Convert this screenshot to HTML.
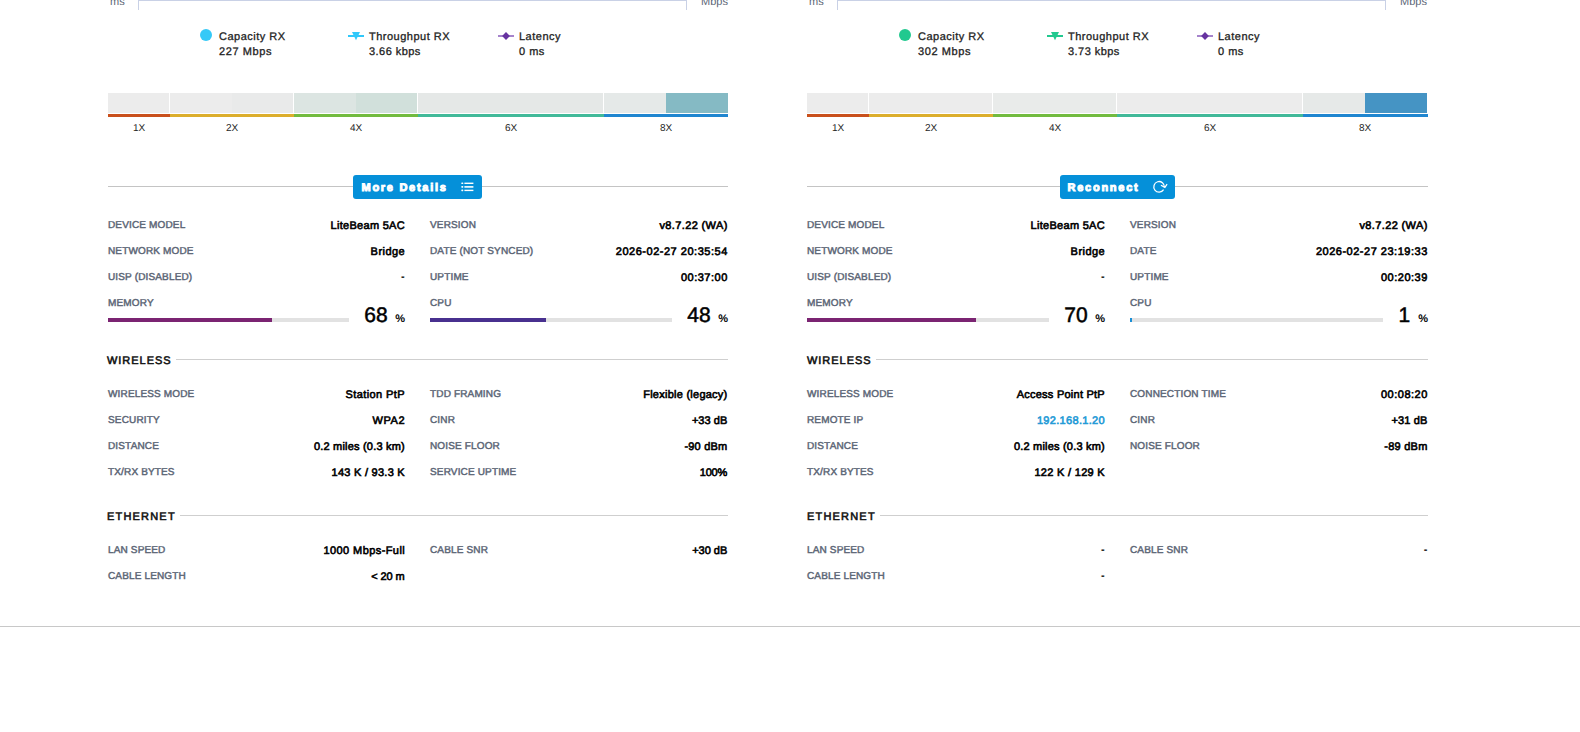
<!DOCTYPE html>
<html><head><meta charset="utf-8"><style>
html,body{margin:0;padding:0;background:#fff;width:1580px;height:732px;overflow:hidden;position:relative}
body{font-family:"Liberation Sans",sans-serif;text-rendering:geometricPrecision}
.t{position:absolute;white-space:nowrap}
.r{position:absolute}
</style></head><body>
<div class="t" style="left:110px;top:-3.31px;font-size:11px;line-height:11px;font-weight:400;color:#5c6676;">ms</div>
<div class="r" style="left:138px;top:0px;width:549px;height:1px;background:#c9d1e6;"></div>
<div class="r" style="left:138px;top:0px;width:1px;height:10px;background:#c9d1e6;"></div>
<div class="r" style="left:686px;top:0px;width:1px;height:10px;background:#c9d1e6;"></div>
<div class="t" style="left:328.00px;width:400px;text-align:right;top:-3.31px;font-size:11px;line-height:11px;font-weight:400;color:#5c6676;">Mbps</div>
<div class="r" style="left:200px;top:29px;width:12px;height:12px;border-radius:50%;background:#35c9f7"></div>
<div class="t" style="left:219px;top:32.09px;font-size:11px;line-height:11px;font-weight:400;color:#222;letter-spacing:0.5px;-webkit-text-stroke:0.3px #222;">Capacity RX</div>
<div class="t" style="left:219px;top:47.09px;font-size:11px;line-height:11px;font-weight:400;color:#222;letter-spacing:0.6px;-webkit-text-stroke:0.3px #222;">227 Mbps</div>
<svg class="r" style="left:346px;top:30px" width="20" height="12" viewBox="0 0 20 12"><rect x="2" y="5" width="16" height="2" fill="#30c8fa"/><path d="M6 2 L14 2 L10 10.2 Z" fill="#30c8fa"/></svg>
<div class="t" style="left:369px;top:32.09px;font-size:11px;line-height:11px;font-weight:400;color:#222;letter-spacing:0.5px;-webkit-text-stroke:0.3px #222;">Throughput RX</div>
<div class="t" style="left:369px;top:47.09px;font-size:11px;line-height:11px;font-weight:400;color:#222;letter-spacing:0.45px;-webkit-text-stroke:0.3px #222;">3.66 kbps</div>
<svg class="r" style="left:496px;top:30px" width="20" height="12" viewBox="0 0 20 12"><rect x="2" y="5" width="16" height="2" fill="#a684cc"/><path d="M10 2 L13.9 6 L10 10 L6.1 6 Z" fill="#6633a0"/></svg>
<div class="t" style="left:519px;top:32.09px;font-size:11px;line-height:11px;font-weight:400;color:#222;letter-spacing:0.5px;-webkit-text-stroke:0.3px #222;">Latency</div>
<div class="t" style="left:519px;top:47.09px;font-size:11px;line-height:11px;font-weight:400;color:#222;letter-spacing:0.5px;-webkit-text-stroke:0.3px #222;">0 ms</div>
<div class="r" style="left:108px;top:93px;width:62px;height:20px;background:#ececec;"></div>
<div class="r" style="left:170px;top:93px;width:62px;height:20px;background:#ececec;"></div>
<div class="r" style="left:232px;top:93px;width:62px;height:20px;background:#e9eaea;"></div>
<div class="r" style="left:294px;top:93px;width:62px;height:20px;background:#dce5e2;"></div>
<div class="r" style="left:356px;top:93px;width:62px;height:20px;background:#d1e0db;"></div>
<div class="r" style="left:418px;top:93px;width:62px;height:20px;background:#e5e8e7;"></div>
<div class="r" style="left:480px;top:93px;width:62px;height:20px;background:#e5e8e7;"></div>
<div class="r" style="left:542px;top:93px;width:62px;height:20px;background:#e5e8e7;"></div>
<div class="r" style="left:604px;top:93px;width:62px;height:20px;background:#e5e9e8;"></div>
<div class="r" style="left:666px;top:93px;width:62px;height:20px;background:#85bac4;"></div>
<div class="r" style="left:169px;top:93px;width:1px;height:21px;background:#fff;"></div>
<div class="r" style="left:293px;top:93px;width:1px;height:21px;background:#fff;"></div>
<div class="r" style="left:417px;top:93px;width:1px;height:21px;background:#fff;"></div>
<div class="r" style="left:603px;top:93px;width:1px;height:21px;background:#fff;"></div>
<div class="r" style="left:108px;top:114px;width:62px;height:3px;background:#c9501c;"></div>
<div class="r" style="left:170px;top:114px;width:124px;height:3px;background:#dcae2c;"></div>
<div class="r" style="left:294px;top:114px;width:124px;height:3px;background:#72bb3f;"></div>
<div class="r" style="left:418px;top:114px;width:186px;height:3px;background:#41b999;"></div>
<div class="r" style="left:604px;top:114px;width:124px;height:3px;background:#1f86d0;"></div>
<div class="t" style="left:109px;width:60px;text-align:center;top:123.53px;font-size:10px;line-height:10px;color:#1e1e1e">1X</div>
<div class="t" style="left:202px;width:60px;text-align:center;top:123.53px;font-size:10px;line-height:10px;color:#1e1e1e">2X</div>
<div class="t" style="left:326px;width:60px;text-align:center;top:123.53px;font-size:10px;line-height:10px;color:#1e1e1e">4X</div>
<div class="t" style="left:481px;width:60px;text-align:center;top:123.53px;font-size:10px;line-height:10px;color:#1e1e1e">6X</div>
<div class="t" style="left:636px;width:60px;text-align:center;top:123.53px;font-size:10px;line-height:10px;color:#1e1e1e">8X</div>
<div class="r" style="left:108px;top:186px;width:620px;height:1px;background:#c4c4c4;"></div>
<div class="r" style="left:353px;top:175px;width:129px;height:24px;background:#0590d9;border-radius:3px"></div>
<div class="t" style="left:361.5px;top:182.69px;font-size:11px;line-height:11px;font-weight:700;color:#fff;letter-spacing:1.72px;-webkit-text-stroke:0.95px #fff;">More Details</div>
<svg class="r" style="left:461px;top:181px" width="14" height="12" viewBox="0 0 14 12"><g fill="#fff"><rect x="0.3" y="1.5" width="2" height="1.6" rx="0.6"/><rect x="3.4" y="1.6" width="9" height="1.4"/><rect x="0.3" y="5.1" width="2" height="1.6" rx="0.6"/><rect x="3.4" y="5.1" width="9" height="1.6"/><rect x="0.3" y="8.6" width="2" height="1.6" rx="0.6"/><rect x="3.4" y="8.7" width="9" height="1.4"/></g></svg>
<div class="t" style="left:108px;top:220.53px;font-size:10px;line-height:10px;font-weight:400;color:#5c6676;letter-spacing:0.15px;-webkit-text-stroke:0.45px #5c6676;">DEVICE MODEL</div>
<div class="t" style="left:4.99px;width:400px;text-align:right;top:220.59px;font-size:11px;line-height:11px;font-weight:400;color:#000;letter-spacing:0.287px;-webkit-text-stroke:0.6px #000;">LiteBeam 5AC</div>
<div class="t" style="left:430px;top:220.53px;font-size:10px;line-height:10px;font-weight:400;color:#5c6676;letter-spacing:0.15px;-webkit-text-stroke:0.45px #5c6676;">VERSION</div>
<div class="t" style="left:327.66px;width:400px;text-align:right;top:220.59px;font-size:11px;line-height:11px;font-weight:400;color:#000;letter-spacing:0.365px;-webkit-text-stroke:0.6px #000;">v8.7.22 (WA)</div>
<div class="t" style="left:108px;top:246.53px;font-size:10px;line-height:10px;font-weight:400;color:#5c6676;letter-spacing:0.15px;-webkit-text-stroke:0.45px #5c6676;">NETWORK MODE</div>
<div class="t" style="left:5.16px;width:400px;text-align:right;top:246.59px;font-size:11px;line-height:11px;font-weight:400;color:#000;letter-spacing:0.461px;-webkit-text-stroke:0.6px #000;">Bridge</div>
<div class="t" style="left:430px;top:246.53px;font-size:10px;line-height:10px;font-weight:400;color:#5c6676;letter-spacing:0.15px;-webkit-text-stroke:0.45px #5c6676;">DATE (NOT SYNCED)</div>
<div class="t" style="left:327.82px;width:400px;text-align:right;top:246.59px;font-size:11px;line-height:11px;font-weight:400;color:#000;letter-spacing:0.519px;-webkit-text-stroke:0.6px #000;">2026-02-27 20:35:54</div>
<div class="t" style="left:108px;top:272.54px;font-size:10px;line-height:10px;font-weight:400;color:#5c6676;letter-spacing:0.15px;-webkit-text-stroke:0.45px #5c6676;">UISP (DISABLED)</div>
<div class="t" style="left:4.70px;width:400px;text-align:right;top:271.59px;font-size:11px;line-height:11px;font-weight:700;color:#000;">-</div>
<div class="t" style="left:430px;top:272.54px;font-size:10px;line-height:10px;font-weight:400;color:#5c6676;letter-spacing:0.15px;-webkit-text-stroke:0.45px #5c6676;">UPTIME</div>
<div class="t" style="left:327.81px;width:400px;text-align:right;top:272.59px;font-size:11px;line-height:11px;font-weight:400;color:#000;letter-spacing:0.51px;-webkit-text-stroke:0.6px #000;">00:37:00</div>
<div class="t" style="left:108px;top:298.54px;font-size:10px;line-height:10px;font-weight:400;color:#5c6676;letter-spacing:0.15px;-webkit-text-stroke:0.45px #5c6676;">MEMORY</div>
<div class="t" style="left:430px;top:298.54px;font-size:10px;line-height:10px;font-weight:400;color:#5c6676;letter-spacing:0.15px;-webkit-text-stroke:0.45px #5c6676;">CPU</div>
<div class="r" style="left:108px;top:318px;width:241px;height:4px;background:#e2e2e2;"></div>
<div class="r" style="left:108px;top:318px;width:164px;height:4px;background:#7b2472;"></div>
<div class="r" style="left:430px;top:318px;width:241.5px;height:4px;background:#e2e2e2;"></div>
<div class="r" style="left:430px;top:318px;width:116px;height:4px;background:#48308f;"></div>
<div class="t" style="left:-12.40px;width:400px;text-align:right;top:305.22px;font-size:21px;line-height:21px;font-weight:400;color:#000;-webkit-text-stroke:0.5px #000;">68</div>
<div class="t" style="left:5.00px;width:400px;text-align:right;top:313.69px;font-size:11px;line-height:11px;font-weight:700;color:#000;">%</div>
<div class="t" style="left:310.60px;width:400px;text-align:right;top:305.22px;font-size:21px;line-height:21px;font-weight:400;color:#000;-webkit-text-stroke:0.5px #000;">48</div>
<div class="t" style="left:328.00px;width:400px;text-align:right;top:313.69px;font-size:11px;line-height:11px;font-weight:700;color:#000;">%</div>
<div class="t" style="left:107px;top:356.29px;font-size:11px;line-height:11px;font-weight:400;color:#111;letter-spacing:0.96px;-webkit-text-stroke:0.55px #111;">WIRELESS</div>
<div class="r" style="left:176px;top:359px;width:552px;height:1px;background:#cfcfcf;"></div>
<div class="t" style="left:108px;top:389.54px;font-size:10px;line-height:10px;font-weight:400;color:#5c6676;letter-spacing:0.15px;-webkit-text-stroke:0.45px #5c6676;">WIRELESS MODE</div>
<div class="t" style="left:5.12px;width:400px;text-align:right;top:389.59px;font-size:11px;line-height:11px;font-weight:400;color:#000;letter-spacing:0.415px;-webkit-text-stroke:0.6px #000;">Station PtP</div>
<div class="t" style="left:430px;top:389.54px;font-size:10px;line-height:10px;font-weight:400;color:#5c6676;letter-spacing:0.15px;-webkit-text-stroke:0.45px #5c6676;">TDD FRAMING</div>
<div class="t" style="left:327.55px;width:400px;text-align:right;top:389.59px;font-size:11px;line-height:11px;font-weight:400;color:#000;letter-spacing:0.25px;-webkit-text-stroke:0.6px #000;">Flexible (legacy)</div>
<div class="t" style="left:108px;top:415.54px;font-size:10px;line-height:10px;font-weight:400;color:#5c6676;letter-spacing:0.15px;-webkit-text-stroke:0.45px #5c6676;">SECURITY</div>
<div class="t" style="left:5.35px;width:400px;text-align:right;top:415.59px;font-size:11px;line-height:11px;font-weight:400;color:#000;letter-spacing:0.647px;-webkit-text-stroke:0.6px #000;">WPA2</div>
<div class="t" style="left:430px;top:415.54px;font-size:10px;line-height:10px;font-weight:400;color:#5c6676;letter-spacing:0.15px;-webkit-text-stroke:0.45px #5c6676;">CINR</div>
<div class="t" style="left:327.35px;width:400px;text-align:right;top:415.59px;font-size:11px;line-height:11px;font-weight:400;color:#000;letter-spacing:0.046px;-webkit-text-stroke:0.6px #000;">+33 dB</div>
<div class="t" style="left:108px;top:441.54px;font-size:10px;line-height:10px;font-weight:400;color:#5c6676;letter-spacing:0.15px;-webkit-text-stroke:0.45px #5c6676;">DISTANCE</div>
<div class="t" style="left:4.89px;width:400px;text-align:right;top:441.59px;font-size:11px;line-height:11px;font-weight:400;color:#000;letter-spacing:0.193px;-webkit-text-stroke:0.6px #000;">0.2 miles (0.3 km)</div>
<div class="t" style="left:430px;top:441.54px;font-size:10px;line-height:10px;font-weight:400;color:#5c6676;letter-spacing:0.15px;-webkit-text-stroke:0.45px #5c6676;">NOISE FLOOR</div>
<div class="t" style="left:327.52px;width:400px;text-align:right;top:441.59px;font-size:11px;line-height:11px;font-weight:400;color:#000;letter-spacing:0.22px;-webkit-text-stroke:0.6px #000;">-90 dBm</div>
<div class="t" style="left:108px;top:467.54px;font-size:10px;line-height:10px;font-weight:400;color:#5c6676;letter-spacing:0.15px;-webkit-text-stroke:0.45px #5c6676;">TX/RX BYTES</div>
<div class="t" style="left:4.96px;width:400px;text-align:right;top:467.59px;font-size:11px;line-height:11px;font-weight:400;color:#000;letter-spacing:0.26px;-webkit-text-stroke:0.6px #000;">143 K / 93.3 K</div>
<div class="t" style="left:430px;top:467.54px;font-size:10px;line-height:10px;font-weight:400;color:#5c6676;letter-spacing:0.15px;-webkit-text-stroke:0.45px #5c6676;">SERVICE UPTIME</div>
<div class="t" style="left:327.09px;width:400px;text-align:right;top:467.59px;font-size:11px;line-height:11px;font-weight:400;color:#000;letter-spacing:-0.214px;-webkit-text-stroke:0.6px #000;">100%</div>
<div class="t" style="left:107px;top:512.29px;font-size:11px;line-height:11px;font-weight:400;color:#111;letter-spacing:1.19px;-webkit-text-stroke:0.55px #111;">ETHERNET</div>
<div class="r" style="left:180px;top:515px;width:548px;height:1px;background:#cfcfcf;"></div>
<div class="t" style="left:108px;top:545.53px;font-size:10px;line-height:10px;font-weight:400;color:#5c6676;letter-spacing:0.15px;-webkit-text-stroke:0.45px #5c6676;">LAN SPEED</div>
<div class="t" style="left:5.11px;width:400px;text-align:right;top:545.59px;font-size:11px;line-height:11px;font-weight:400;color:#000;letter-spacing:0.413px;-webkit-text-stroke:0.6px #000;">1000 Mbps-Full</div>
<div class="t" style="left:430px;top:545.53px;font-size:10px;line-height:10px;font-weight:400;color:#5c6676;letter-spacing:0.15px;-webkit-text-stroke:0.45px #5c6676;">CABLE SNR</div>
<div class="t" style="left:327.30px;width:400px;text-align:right;top:545.59px;font-size:11px;line-height:11px;font-weight:400;color:#000;-webkit-text-stroke:0.6px #000;">+30 dB</div>
<div class="t" style="left:108px;top:571.53px;font-size:10px;line-height:10px;font-weight:400;color:#5c6676;letter-spacing:0.15px;-webkit-text-stroke:0.45px #5c6676;">CABLE LENGTH</div>
<div class="t" style="left:4.59px;width:400px;text-align:right;top:571.59px;font-size:11px;line-height:11px;font-weight:400;color:#000;letter-spacing:-0.108px;-webkit-text-stroke:0.6px #000;">&lt; 20 m</div>
<div class="t" style="left:809px;top:-3.31px;font-size:11px;line-height:11px;font-weight:400;color:#5c6676;">ms</div>
<div class="r" style="left:837px;top:0px;width:549px;height:1px;background:#c9d1e6;"></div>
<div class="r" style="left:837px;top:0px;width:1px;height:10px;background:#c9d1e6;"></div>
<div class="r" style="left:1385px;top:0px;width:1px;height:10px;background:#c9d1e6;"></div>
<div class="t" style="left:1027.00px;width:400px;text-align:right;top:-3.31px;font-size:11px;line-height:11px;font-weight:400;color:#5c6676;">Mbps</div>
<div class="r" style="left:899px;top:29px;width:12px;height:12px;border-radius:50%;background:#22c98f"></div>
<div class="t" style="left:918px;top:32.09px;font-size:11px;line-height:11px;font-weight:400;color:#222;letter-spacing:0.5px;-webkit-text-stroke:0.3px #222;">Capacity RX</div>
<div class="t" style="left:918px;top:47.09px;font-size:11px;line-height:11px;font-weight:400;color:#222;letter-spacing:0.6px;-webkit-text-stroke:0.3px #222;">302 Mbps</div>
<svg class="r" style="left:1045px;top:30px" width="20" height="12" viewBox="0 0 20 12"><rect x="2" y="5" width="16" height="2" fill="#22c98f"/><path d="M6 2 L14 2 L10 10.2 Z" fill="#22c98f"/></svg>
<div class="t" style="left:1068px;top:32.09px;font-size:11px;line-height:11px;font-weight:400;color:#222;letter-spacing:0.5px;-webkit-text-stroke:0.3px #222;">Throughput RX</div>
<div class="t" style="left:1068px;top:47.09px;font-size:11px;line-height:11px;font-weight:400;color:#222;letter-spacing:0.45px;-webkit-text-stroke:0.3px #222;">3.73 kbps</div>
<svg class="r" style="left:1195px;top:30px" width="20" height="12" viewBox="0 0 20 12"><rect x="2" y="5" width="16" height="2" fill="#a684cc"/><path d="M10 2 L13.9 6 L10 10 L6.1 6 Z" fill="#6633a0"/></svg>
<div class="t" style="left:1218px;top:32.09px;font-size:11px;line-height:11px;font-weight:400;color:#222;letter-spacing:0.5px;-webkit-text-stroke:0.3px #222;">Latency</div>
<div class="t" style="left:1218px;top:47.09px;font-size:11px;line-height:11px;font-weight:400;color:#222;letter-spacing:0.5px;-webkit-text-stroke:0.3px #222;">0 ms</div>
<div class="r" style="left:807px;top:93px;width:62px;height:20px;background:#ececec;"></div>
<div class="r" style="left:869px;top:93px;width:62px;height:20px;background:#ececec;"></div>
<div class="r" style="left:931px;top:93px;width:62px;height:20px;background:#ececec;"></div>
<div class="r" style="left:993px;top:93px;width:62px;height:20px;background:#e9ebea;"></div>
<div class="r" style="left:1055px;top:93px;width:62px;height:20px;background:#e9ebea;"></div>
<div class="r" style="left:1117px;top:93px;width:62px;height:20px;background:#ececec;"></div>
<div class="r" style="left:1179px;top:93px;width:62px;height:20px;background:#ececec;"></div>
<div class="r" style="left:1241px;top:93px;width:62px;height:20px;background:#ececec;"></div>
<div class="r" style="left:1303px;top:93px;width:62px;height:20px;background:#e6e9e8;"></div>
<div class="r" style="left:1365px;top:93px;width:62px;height:20px;background:#4594c4;"></div>
<div class="r" style="left:868px;top:93px;width:1px;height:21px;background:#fff;"></div>
<div class="r" style="left:992px;top:93px;width:1px;height:21px;background:#fff;"></div>
<div class="r" style="left:1116px;top:93px;width:1px;height:21px;background:#fff;"></div>
<div class="r" style="left:1302px;top:93px;width:1px;height:21px;background:#fff;"></div>
<div class="r" style="left:807px;top:114px;width:62px;height:3px;background:#c9501c;"></div>
<div class="r" style="left:869px;top:114px;width:124px;height:3px;background:#dcae2c;"></div>
<div class="r" style="left:993px;top:114px;width:124px;height:3px;background:#72bb3f;"></div>
<div class="r" style="left:1117px;top:114px;width:186px;height:3px;background:#41b999;"></div>
<div class="r" style="left:1303px;top:114px;width:125px;height:3px;background:#1f86d0;"></div>
<div class="t" style="left:808px;width:60px;text-align:center;top:123.53px;font-size:10px;line-height:10px;color:#1e1e1e">1X</div>
<div class="t" style="left:901px;width:60px;text-align:center;top:123.53px;font-size:10px;line-height:10px;color:#1e1e1e">2X</div>
<div class="t" style="left:1025px;width:60px;text-align:center;top:123.53px;font-size:10px;line-height:10px;color:#1e1e1e">4X</div>
<div class="t" style="left:1180px;width:60px;text-align:center;top:123.53px;font-size:10px;line-height:10px;color:#1e1e1e">6X</div>
<div class="t" style="left:1335px;width:60px;text-align:center;top:123.53px;font-size:10px;line-height:10px;color:#1e1e1e">8X</div>
<div class="r" style="left:807px;top:186px;width:621px;height:1px;background:#c4c4c4;"></div>
<div class="r" style="left:1060px;top:175px;width:115px;height:24px;background:#0590d9;border-radius:3px"></div>
<div class="t" style="left:1067.5px;top:182.69px;font-size:11px;line-height:11px;font-weight:700;color:#fff;letter-spacing:1.75px;-webkit-text-stroke:0.95px #fff;">Reconnect</div>
<svg class="r" style="left:1150.5px;top:179px" width="18" height="16" viewBox="0 0 18 16"><path d="M12.6 10.65 A5.3 5.3 0 1 1 13.4 8.2" fill="none" stroke="#fff" stroke-width="1.25"/><path d="M9.9 6.3 L13.9 8.4 L16.1 5.1" fill="none" stroke="#fff" stroke-width="1.25" stroke-linejoin="miter"/></svg>
<div class="t" style="left:807px;top:220.53px;font-size:10px;line-height:10px;font-weight:400;color:#5c6676;letter-spacing:0.15px;-webkit-text-stroke:0.45px #5c6676;">DEVICE MODEL</div>
<div class="t" style="left:704.99px;width:400px;text-align:right;top:220.59px;font-size:11px;line-height:11px;font-weight:400;color:#000;letter-spacing:0.287px;-webkit-text-stroke:0.6px #000;">LiteBeam 5AC</div>
<div class="t" style="left:1130px;top:220.53px;font-size:10px;line-height:10px;font-weight:400;color:#5c6676;letter-spacing:0.15px;-webkit-text-stroke:0.45px #5c6676;">VERSION</div>
<div class="t" style="left:1027.66px;width:400px;text-align:right;top:220.59px;font-size:11px;line-height:11px;font-weight:400;color:#000;letter-spacing:0.365px;-webkit-text-stroke:0.6px #000;">v8.7.22 (WA)</div>
<div class="t" style="left:807px;top:246.53px;font-size:10px;line-height:10px;font-weight:400;color:#5c6676;letter-spacing:0.15px;-webkit-text-stroke:0.45px #5c6676;">NETWORK MODE</div>
<div class="t" style="left:705.16px;width:400px;text-align:right;top:246.59px;font-size:11px;line-height:11px;font-weight:400;color:#000;letter-spacing:0.461px;-webkit-text-stroke:0.6px #000;">Bridge</div>
<div class="t" style="left:1130px;top:246.53px;font-size:10px;line-height:10px;font-weight:400;color:#5c6676;letter-spacing:0.15px;-webkit-text-stroke:0.45px #5c6676;">DATE</div>
<div class="t" style="left:1027.81px;width:400px;text-align:right;top:246.59px;font-size:11px;line-height:11px;font-weight:400;color:#000;letter-spacing:0.514px;-webkit-text-stroke:0.6px #000;">2026-02-27 23:19:33</div>
<div class="t" style="left:807px;top:272.54px;font-size:10px;line-height:10px;font-weight:400;color:#5c6676;letter-spacing:0.15px;-webkit-text-stroke:0.45px #5c6676;">UISP (DISABLED)</div>
<div class="t" style="left:704.70px;width:400px;text-align:right;top:271.59px;font-size:11px;line-height:11px;font-weight:700;color:#000;">-</div>
<div class="t" style="left:1130px;top:272.54px;font-size:10px;line-height:10px;font-weight:400;color:#5c6676;letter-spacing:0.15px;-webkit-text-stroke:0.45px #5c6676;">UPTIME</div>
<div class="t" style="left:1027.80px;width:400px;text-align:right;top:272.59px;font-size:11px;line-height:11px;font-weight:400;color:#000;letter-spacing:0.496px;-webkit-text-stroke:0.6px #000;">00:20:39</div>
<div class="t" style="left:807px;top:298.54px;font-size:10px;line-height:10px;font-weight:400;color:#5c6676;letter-spacing:0.15px;-webkit-text-stroke:0.45px #5c6676;">MEMORY</div>
<div class="t" style="left:1130px;top:298.54px;font-size:10px;line-height:10px;font-weight:400;color:#5c6676;letter-spacing:0.15px;-webkit-text-stroke:0.45px #5c6676;">CPU</div>
<div class="r" style="left:807px;top:318px;width:242px;height:4px;background:#e2e2e2;"></div>
<div class="r" style="left:807px;top:318px;width:169px;height:4px;background:#7b2472;"></div>
<div class="r" style="left:1130px;top:318px;width:253px;height:4px;background:#e2e2e2;"></div>
<div class="r" style="left:1130px;top:318px;width:2px;height:4px;background:#1a8fd6;"></div>
<div class="t" style="left:687.60px;width:400px;text-align:right;top:305.22px;font-size:21px;line-height:21px;font-weight:400;color:#000;-webkit-text-stroke:0.5px #000;">70</div>
<div class="t" style="left:705.00px;width:400px;text-align:right;top:313.69px;font-size:11px;line-height:11px;font-weight:700;color:#000;">%</div>
<div class="t" style="left:1010.30px;width:400px;text-align:right;top:305.22px;font-size:21px;line-height:21px;font-weight:400;color:#000;-webkit-text-stroke:0.5px #000;">1</div>
<div class="t" style="left:1028.00px;width:400px;text-align:right;top:313.69px;font-size:11px;line-height:11px;font-weight:700;color:#000;">%</div>
<div class="t" style="left:807px;top:356.29px;font-size:11px;line-height:11px;font-weight:400;color:#111;letter-spacing:0.96px;-webkit-text-stroke:0.55px #111;">WIRELESS</div>
<div class="r" style="left:876px;top:359px;width:552px;height:1px;background:#cfcfcf;"></div>
<div class="t" style="left:807px;top:389.54px;font-size:10px;line-height:10px;font-weight:400;color:#5c6676;letter-spacing:0.15px;-webkit-text-stroke:0.45px #5c6676;">WIRELESS MODE</div>
<div class="t" style="left:704.94px;width:400px;text-align:right;top:389.59px;font-size:11px;line-height:11px;font-weight:400;color:#000;letter-spacing:0.242px;-webkit-text-stroke:0.6px #000;">Access Point PtP</div>
<div class="t" style="left:1130px;top:389.54px;font-size:10px;line-height:10px;font-weight:400;color:#5c6676;letter-spacing:0.15px;-webkit-text-stroke:0.45px #5c6676;">CONNECTION TIME</div>
<div class="t" style="left:1027.80px;width:400px;text-align:right;top:389.59px;font-size:11px;line-height:11px;font-weight:400;color:#000;letter-spacing:0.496px;-webkit-text-stroke:0.6px #000;">00:08:20</div>
<div class="t" style="left:807px;top:415.54px;font-size:10px;line-height:10px;font-weight:400;color:#5c6676;letter-spacing:0.15px;-webkit-text-stroke:0.45px #5c6676;">REMOTE IP</div>
<div class="t" style="left:705.02px;width:400px;text-align:right;top:415.59px;font-size:11px;line-height:11px;font-weight:400;color:#000;letter-spacing:0.324px;-webkit-text-stroke:0.6px #000;"><span style="color:#1f9ad6;-webkit-text-stroke:0.6px #1f9ad6">192.168.1.20</span></div>
<div class="t" style="left:1130px;top:415.54px;font-size:10px;line-height:10px;font-weight:400;color:#5c6676;letter-spacing:0.15px;-webkit-text-stroke:0.45px #5c6676;">CINR</div>
<div class="t" style="left:1027.43px;width:400px;text-align:right;top:415.59px;font-size:11px;line-height:11px;font-weight:400;color:#000;letter-spacing:0.126px;-webkit-text-stroke:0.6px #000;">+31 dB</div>
<div class="t" style="left:807px;top:441.54px;font-size:10px;line-height:10px;font-weight:400;color:#5c6676;letter-spacing:0.15px;-webkit-text-stroke:0.45px #5c6676;">DISTANCE</div>
<div class="t" style="left:704.89px;width:400px;text-align:right;top:441.59px;font-size:11px;line-height:11px;font-weight:400;color:#000;letter-spacing:0.193px;-webkit-text-stroke:0.6px #000;">0.2 miles (0.3 km)</div>
<div class="t" style="left:1130px;top:441.54px;font-size:10px;line-height:10px;font-weight:400;color:#5c6676;letter-spacing:0.15px;-webkit-text-stroke:0.45px #5c6676;">NOISE FLOOR</div>
<div class="t" style="left:1027.54px;width:400px;text-align:right;top:441.59px;font-size:11px;line-height:11px;font-weight:400;color:#000;letter-spacing:0.237px;-webkit-text-stroke:0.6px #000;">-89 dBm</div>
<div class="t" style="left:807px;top:467.54px;font-size:10px;line-height:10px;font-weight:400;color:#5c6676;letter-spacing:0.15px;-webkit-text-stroke:0.45px #5c6676;">TX/RX BYTES</div>
<div class="t" style="left:705.00px;width:400px;text-align:right;top:467.59px;font-size:11px;line-height:11px;font-weight:400;color:#000;letter-spacing:0.302px;-webkit-text-stroke:0.6px #000;">122 K / 129 K</div>
<div class="t" style="left:807px;top:512.29px;font-size:11px;line-height:11px;font-weight:400;color:#111;letter-spacing:1.19px;-webkit-text-stroke:0.55px #111;">ETHERNET</div>
<div class="r" style="left:880px;top:515px;width:548px;height:1px;background:#cfcfcf;"></div>
<div class="t" style="left:807px;top:545.53px;font-size:10px;line-height:10px;font-weight:400;color:#5c6676;letter-spacing:0.15px;-webkit-text-stroke:0.45px #5c6676;">LAN SPEED</div>
<div class="t" style="left:704.70px;width:400px;text-align:right;top:544.59px;font-size:11px;line-height:11px;font-weight:700;color:#000;">-</div>
<div class="t" style="left:1130px;top:545.53px;font-size:10px;line-height:10px;font-weight:400;color:#5c6676;letter-spacing:0.15px;-webkit-text-stroke:0.45px #5c6676;">CABLE SNR</div>
<div class="t" style="left:1027.30px;width:400px;text-align:right;top:544.59px;font-size:11px;line-height:11px;font-weight:700;color:#000;">-</div>
<div class="t" style="left:807px;top:571.53px;font-size:10px;line-height:10px;font-weight:400;color:#5c6676;letter-spacing:0.15px;-webkit-text-stroke:0.45px #5c6676;">CABLE LENGTH</div>
<div class="t" style="left:704.70px;width:400px;text-align:right;top:570.59px;font-size:11px;line-height:11px;font-weight:700;color:#000;">-</div>
<div class="r" style="left:0px;top:626px;width:1580px;height:1px;background:#c8c8c8;"></div>
</body></html>
